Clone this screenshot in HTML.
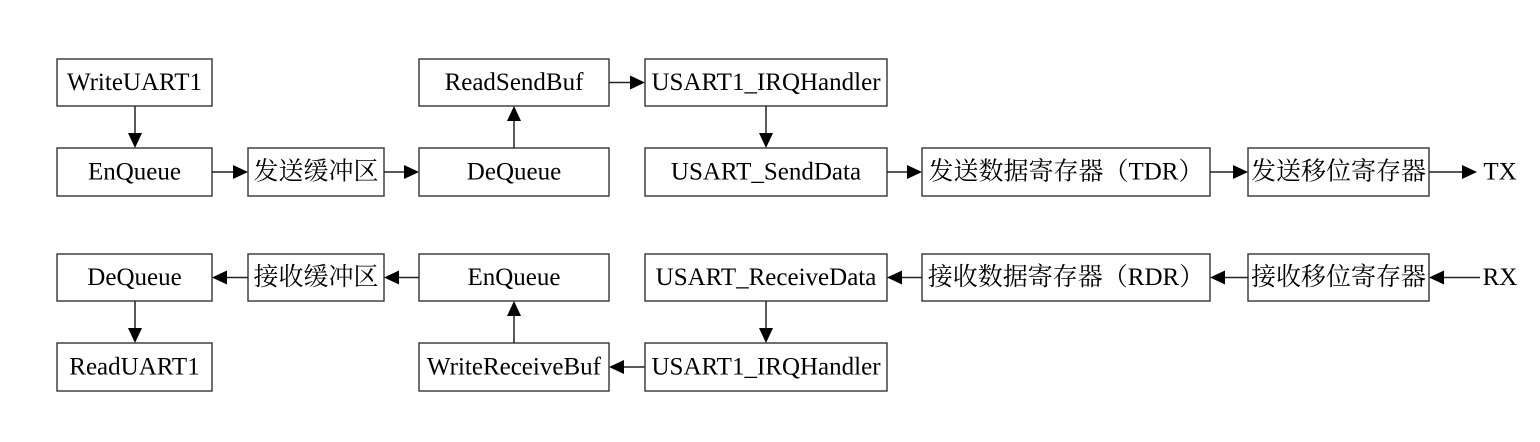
<!DOCTYPE html>
<html><head><meta charset="utf-8"><style>
html,body{margin:0;padding:0;background:#fff;}
svg{display:block}
text{font-family:"Liberation Serif","Noto Serif CJK SC",serif;font-size:25px;fill:#000;text-anchor:middle;dominant-baseline:central}
rect{fill:#fff;stroke:#333;stroke-width:1.4}
line{stroke:#222;stroke-width:1.5}
polygon{fill:#000}
</style></head><body>
<svg width="1540" height="442" viewBox="0 0 1540 442" xmlns="http://www.w3.org/2000/svg">
<rect x="57" y="59" width="155" height="47"/><text x="134.5" y="82.5">WriteUART1</text>
<rect x="419" y="59" width="190" height="47"/><text x="514" y="82.5">ReadSendBuf</text>
<rect x="645" y="59" width="242" height="47"/><text x="766" y="82.5">USART1_IRQHandler</text>
<rect x="57" y="148" width="155" height="48"/><text x="134.5" y="172">EnQueue</text>
<rect x="248" y="148" width="136" height="48"/><text x="316" y="172">发送缓冲区</text>
<rect x="419" y="148" width="190" height="48"/><text x="514" y="172">DeQueue</text>
<rect x="645" y="148" width="242" height="48"/><text x="766" y="172">USART_SendData</text>
<rect x="922" y="148" width="288" height="48"/><text x="1066" y="172">发送数据寄存器（TDR）</text>
<rect x="1248" y="148" width="181" height="48"/><text x="1338.5" y="172">发送移位寄存器</text>
<text x="1500" y="172">TX</text>
<rect x="57" y="254" width="155" height="47"/><text x="134.5" y="277.5">DeQueue</text>
<rect x="248" y="254" width="136" height="47"/><text x="316" y="277.5">接收缓冲区</text>
<rect x="419" y="254" width="190" height="47"/><text x="514" y="277.5">EnQueue</text>
<rect x="645" y="254" width="242" height="47"/><text x="766" y="277.5">USART_ReceiveData</text>
<rect x="922" y="254" width="288" height="47"/><text x="1066" y="277.5">接收数据寄存器（RDR）</text>
<rect x="1248" y="254" width="181" height="47"/><text x="1338.5" y="277.5">接收移位寄存器</text>
<text x="1500" y="277.5">RX</text>
<rect x="57" y="343" width="155" height="48"/><text x="134.5" y="367">ReadUART1</text>
<rect x="419" y="343" width="190" height="48"/><text x="514" y="367">WriteReceiveBuf</text>
<rect x="645" y="343" width="242" height="48"/><text x="766" y="367">USART1_IRQHandler</text>

<line x1="135" y1="106" x2="135" y2="133"/><polygon points="128,133 142,133 135,148"/>
<line x1="212" y1="172" x2="233" y2="172"/><polygon points="233,165 233,179 248,172"/>
<line x1="384" y1="172" x2="404" y2="172"/><polygon points="404,165 404,179 419,172"/>
<line x1="514" y1="148" x2="514" y2="121"/><polygon points="507,121 521,121 514,106"/>
<line x1="609" y1="82.5" x2="630" y2="82.5"/><polygon points="630,75.5 630,89.5 645,82.5"/>
<line x1="766" y1="106" x2="766" y2="133"/><polygon points="759,133 773,133 766,148"/>
<line x1="887" y1="172" x2="907" y2="172"/><polygon points="907,165 907,179 922,172"/>
<line x1="1210" y1="172" x2="1233" y2="172"/><polygon points="1233,165 1233,179 1248,172"/>
<line x1="1429" y1="172" x2="1462" y2="172"/><polygon points="1462,165 1462,179 1477,172"/>

<line x1="1480" y1="277.5" x2="1444" y2="277.5"/><polygon points="1444,270.5 1444,284.5 1429,277.5"/>
<line x1="1248" y1="277.5" x2="1225" y2="277.5"/><polygon points="1225,270.5 1225,284.5 1210,277.5"/>
<line x1="922" y1="277.5" x2="902" y2="277.5"/><polygon points="902,270.5 902,284.5 887,277.5"/>
<line x1="766" y1="301" x2="766" y2="328"/><polygon points="759,328 773,328 766,343"/>
<line x1="645" y1="367" x2="624" y2="367"/><polygon points="624,360 624,374 609,367"/>
<line x1="514" y1="343" x2="514" y2="316"/><polygon points="507,316 521,316 514,301"/>
<line x1="419" y1="277.5" x2="399" y2="277.5"/><polygon points="399,270.5 399,284.5 384,277.5"/>
<line x1="248" y1="277.5" x2="227" y2="277.5"/><polygon points="227,270.5 227,284.5 212,277.5"/>
<line x1="135" y1="301" x2="135" y2="328"/><polygon points="128,328 142,328 135,343"/>
</svg>
</body></html>
